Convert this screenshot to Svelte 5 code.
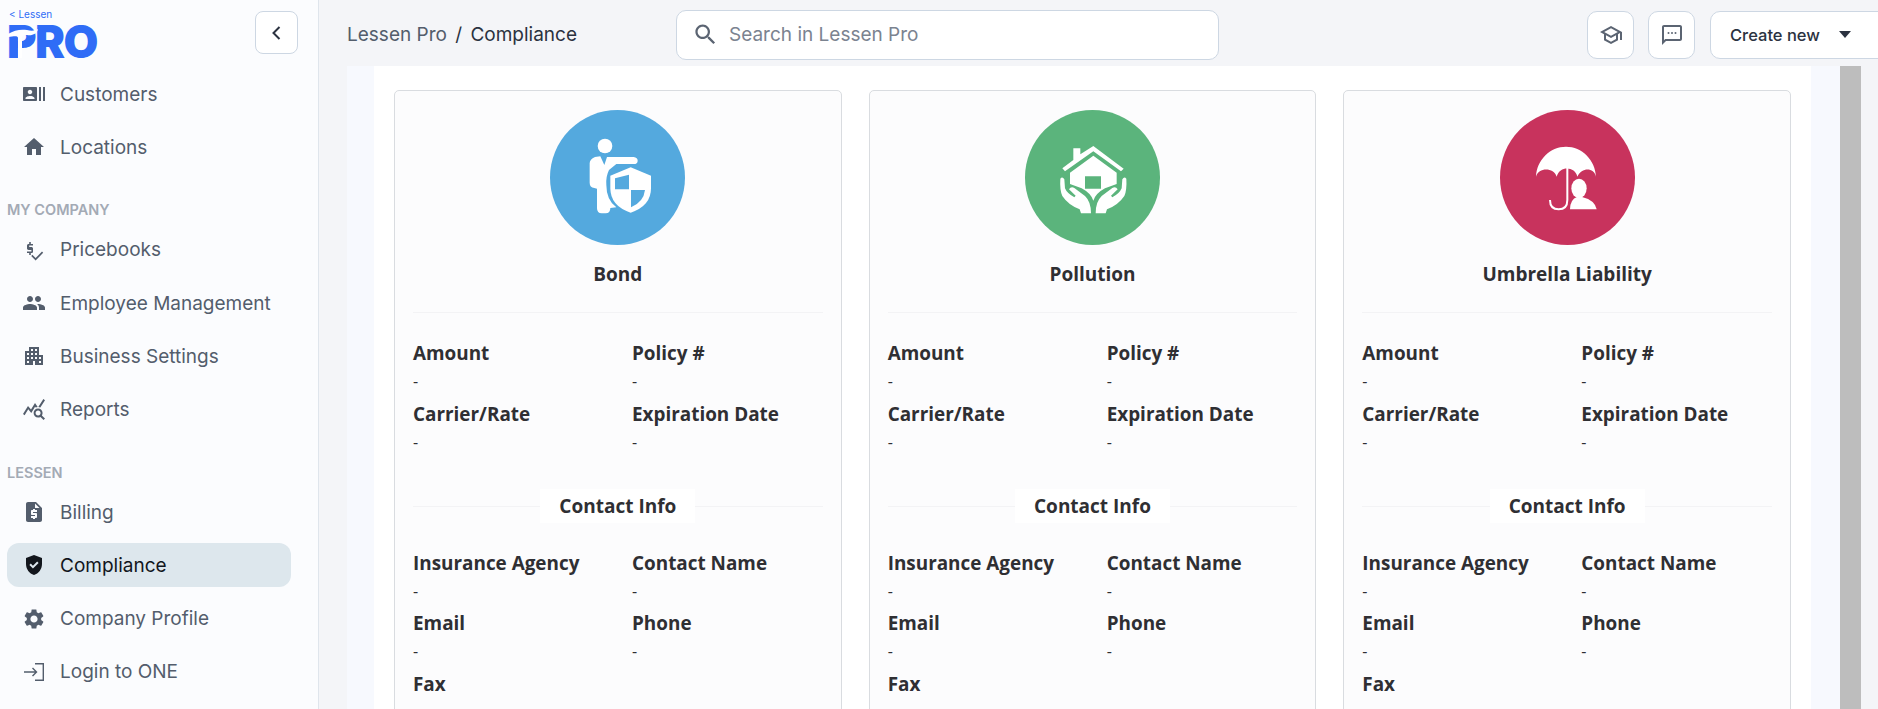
<script>
	const icons = {
		customers: "M21 5v14h2V5h-2zm-4 14h2V5h-2v14zM14 5H2c-.55 0-1 .45-1 1v12c0 .55.45 1 1 1h12c.55 0 1-.45 1-1V6c0-.55-.45-1-1-1zM8 7.75c1.24 0 2.25 1.01 2.25 2.25S9.24 12.25 8 12.25 5.75 11.24 5.75 10 6.76 7.75 8 7.75zM12.5 17h-9v-.75c0-1.5 3-2.25 4.5-2.25s4.5.75 4.5 2.25V17z",
		home: "M10 20v-6h4v6h5v-8h3L12 3 2 12h3v8z",
		price: "M11 9H7.2V7.6H11V6H8.8V4H7.2v2H6.6C5.7 6 5 6.7 5 7.6v3c0 .9.7 1.4 1.6 1.4h2.8v1.4H5V15h2.2v2h1.6v-2h.6c.9 0 1.6-.7 1.6-1.6v-2.8c0-.9-.7-1.6-1.6-1.6H7.2V9zM20 13.6l-6.4 6.4-3.2-3.2-1.2 1.2 4.4 4.4 7.6-7.6z",
		people: "M16 11c1.66 0 2.99-1.34 2.99-3S17.66 5 16 5c-1.66 0-3 1.34-3 3s1.34 3 3 3zm-8 0c1.66 0 2.99-1.34 2.99-3S9.66 5 8 5C6.34 5 5 6.34 5 8s1.34 3 3 3zm0 2c-2.33 0-7 1.17-7 3.5V19h14v-2.5c0-2.33-4.67-3.5-7-3.5zm8 0c-.29 0-.62.02-.97.05 1.16.84 1.97 1.97 1.97 3.45V19h6v-2.5c0-2.33-4.67-3.5-7-3.5z",
		building: "M17 11V3H7v4H3v14h8v-4h2v4h8V11h-4zM7 19H5v-2h2v2zm0-4H5v-2h2v2zm0-4H5V9h2v2zm4 4H9v-2h2v2zm0-4H9V9h2v2zm0-4H9V5h2v2zm4 8h-2v-2h2v2zm0-4h-2V9h2v2zm0-4h-2V5h2v2zm4 12h-2v-2h2v2zm0-4h-2v-2h2v2z",
		reports: "M19.88 18.47c.44-.7.7-1.51.7-2.39 0-2.49-2.01-4.5-4.5-4.5s-4.5 2.01-4.5 4.5 2.01 4.5 4.49 4.5c.88 0 1.7-.26 2.39-.7L21.58 23 23 21.58l-3.12-3.11zm-3.8.11c-1.38 0-2.5-1.12-2.5-2.5s1.12-2.5 2.5-2.5 2.5 1.12 2.5 2.5-1.12 2.5-2.5 2.5zm-.36-8.5c-.74.02-1.45.18-2.1.45l-.55-.83-3.8 6.18-3.01-3.52-3.63 5.81L1 17l5-8 3 3.5L13 6l2.72 4.08zm2.59.5c-.64-.28-1.33-.45-2.05-.49L21.38 2 23 3.18l-4.69 7.4z",
		billing: "M14 2H6c-1.1 0-1.99.9-1.99 2L4 20c0 1.1.89 2 1.99 2H18c1.1 0 2-.9 2-2V8l-6-6zm1 10h-4v1h3c.55 0 1 .45 1 1v3c0 .55-.45 1-1 1h-1v1h-2v-1H9v-2h4v-1h-3c-.55 0-1-.45-1-1v-3c0-.55.45-1 1-1h1V9h2v1h2v2zm-2-4V3.5L17.5 8H13z",
		shield: "M12 2 4 5v6.09c0 5.05 3.41 9.76 8 10.91 4.59-1.15 8-5.86 8-10.91V5l-8-3zm-1.06 13.54L7.4 12l1.41-1.41 2.12 2.12 4.24-4.24 1.41 1.41-5.64 5.66z",
		settings: "M19.14 12.94c.04-.3.06-.61.06-.94 0-.32-.02-.64-.07-.94l2.03-1.58c.18-.14.23-.41.12-.61l-1.92-3.32c-.12-.22-.37-.29-.59-.22l-2.39.96c-.5-.38-1.03-.7-1.62-.94l-.36-2.54c-.04-.24-.24-.41-.48-.41h-3.84c-.24 0-.43.17-.47.41l-.36 2.54c-.59.24-1.13.57-1.62.94l-2.39-.96c-.22-.08-.47 0-.59.22L2.74 8.87c-.12.21-.08.47.12.61l2.03 1.58c-.05.3-.09.63-.09.94s.02.64.07.94l-2.03 1.58c-.18.14-.23.41-.12.61l1.92 3.32c.12.22.37.29.59.22l2.39-.96c.5.38 1.03.7 1.62.94l.36 2.54c.05.24.24.41.48.41h3.84c.24 0 .44-.17.47-.41l.36-2.54c.59-.24 1.13-.56 1.62-.94l2.39.96c.22.08.47 0 .59-.22l1.92-3.32c.12-.22.07-.47-.12-.61l-2.01-1.58zM12 15.6c-1.98 0-3.6-1.62-3.6-3.6s1.62-3.6 3.6-3.6 3.6 1.62 3.6 3.6-1.62 3.6-3.6 3.6z",
		login: "M11 7.5 10 8.5l2.8 2.8H2v1.4h10.8L10 15.5l1 1 4.5-4.5L11 7.5zM13 3v1.4h7.6v15.2H13V21h9V3h-9z"
	};

	const nav = [
		{ label: "Customers", icon: "customers" },
		{ label: "Locations", icon: "home" },
		{ heading: "MY COMPANY" },
		{ label: "Pricebooks", icon: "price" },
		{ label: "Employee Management", icon: "people" },
		{ label: "Business Settings", icon: "building" },
		{ label: "Reports", icon: "reports" },
		{ heading: "LESSEN" },
		{ label: "Billing", icon: "billing" },
		{ label: "Compliance", icon: "shield", active: true },
		{ label: "Company Profile", icon: "settings" },
		{ label: "Login to ONE", icon: "login" }
	];

	const cards = [
		{ title: "Bond", kind: "bond", color: "#54a9de" },
		{ title: "Pollution", kind: "pollution", color: "#5bb47c" },
		{ title: "Umbrella Liability", kind: "umbrella", color: "#c8335d" }
	];

	const policy = ["Amount", "Policy #", "Carrier/Rate", "Expiration Date"];
	const contact = ["Insurance Agency", "Contact Name", "Email", "Phone", "Fax"];
</script>

{#snippet fields(list)}
	<div class="fields">
		{#each list as name}
			<div class="field">
				<div class="name">{name}</div>
				<div class="value">-</div>
			</div>
		{/each}
	</div>
{/snippet}

<div class="page">
	<aside class="sidebar">
		<div class="brand">
			<div class="logo">
				<span class="logo-top">&lt; Lessen</span>
				<span class="logo-pro">PRO</span>
				<svg class="logo-cut" viewBox="0 0 34 34" aria-hidden="true">
					<path d="M0 9 C6 5 13 4 19 5 C23 6 27 6 30 4 C29 9 24 11 19 10 C16 9.5 14 10.5 14 13 V33 H10 V13 C10 11 8 10.5 0 12Z" fill="#fff" />
				</svg>
			</div>
			<button class="collapse" aria-label="Collapse">
				<svg viewBox="0 0 24 24" width="24" height="24"><path d="M14.5 6 8.5 12l6 6" fill="none" stroke="#2b3240" stroke-width="2" /></svg>
			</button>
		</div>
		<nav>
			{#each nav as item}
				{#if item.heading}
					<div class="heading">{item.heading}</div>
				{:else}
					<div class="item" class:active={item.active}>
						<svg viewBox="0 0 24 24" width="24" height="24"><path d={icons[item.icon]} fill="currentColor" /></svg>
						<span>{item.label}</span>
					</div>
				{/if}
			{/each}
		</nav>
	</aside>

	<div class="main">
		<header class="topbar">
			<div class="crumbs"><span class="muted">Lessen Pro</span> <span class="sep">/</span> Compliance</div>
			<div class="search">
				<svg viewBox="0 0 24 24" width="27" height="27"><path d="M15.5 14h-.79l-.28-.27C15.41 12.59 16 11.11 16 9.5 16 5.91 13.09 3 9.5 3S3 5.91 3 9.5 5.91 16 9.5 16c1.61 0 3.09-.59 4.23-1.57l.27.28v.79l5 4.99L20.49 19l-4.99-5zm-6 0C7.01 14 5 11.99 5 9.5S7.01 5 9.5 5 14 7.01 14 9.5 11.99 14 9.5 14z" fill="#5b6472" /></svg>
				<span>Search in Lessen Pro</span>
			</div>
			<div class="actions">
				<button class="square" aria-label="Learn">
					<svg viewBox="0 0 24 24" width="24" height="24"><path d="M12 3 1 9l4 2.18v6L12 21l7-3.82v-6l2-1.09V17h2V9L12 3zm6.82 6L12 12.72 5.18 9 12 5.28 18.82 9zM17 15.99l-5 2.73-5-2.73v-3.72L12 15l5-2.73v3.72z" fill="#5b6472" /></svg>
				</button>
				<button class="square" aria-label="Messages">
					<svg viewBox="0 0 24 24" width="24" height="24"><path d="M20 2H4c-1.1 0-2 .9-2 2v18l4-4h14c1.1 0 2-.9 2-2V4c0-1.1-.9-2-2-2zm0 14H5.17L4 17.17V4h16v12z" fill="#5b6472" /><circle cx="8.5" cy="10" r="1" fill="#5b6472" /><circle cx="12" cy="10" r="1" fill="#5b6472" /><circle cx="15.5" cy="10" r="1" fill="#5b6472" /></svg>
				</button>
				<button class="create">
					<span>Create new</span>
					<svg viewBox="0 0 12 7" width="12" height="7"><path d="M0 0h12L6 7z" fill="#2b3240" /></svg>
				</button>
			</div>
		</header>

		<div class="body">
			<div class="track">
				<main class="panel">
					{#each cards as card}
						<section class="card">
							<div class="badge" style="background: {card.color}">
								{#if card.kind === "bond"}
									<svg viewBox="63 0 405 405" fill="#fff">
										<circle cx="228" cy="108" r="22" />
										<path d="M198 141 L214 139 L226 165 L234 141 H314 Q326 143 326 152 Q326 162 314 162 H262 L240 180 Q230 200 232 225 Q232 270 262 292 L244 294 Q244 310 230 310 H218 Q204 310 204 295 V236 L196 234 Q182 232 182 218 V160 Q182 148 198 141Z" />
										<path d="M305 172 L366 197 V235 Q366 288 305 308 Q244 288 244 235 V197Z" stroke={card.color} stroke-width="10" paint-order="stroke" />
										<path d="M300 194 V238 H258 V205Z M306 240 H348 Q344 276 306 292Z" fill={card.color} />
									</svg>
								{:else if card.kind === "pollution"}
									<svg viewBox="60 0 405 405" fill="#fff">
										<path d="M205 115 H226 V133 L265 108 L356 176 L348 184 L265 124 L180 184 L172 175 L205 150Z" />
										<path d="M265 137 L335 188 V222 L300 235 Q272 250 265 272 Q258 250 230 235 L195 222 V188Z M240 199 V236 H288 V199Z" fill-rule="evenodd" />
										<path d="M166 206 Q172 198 178 208 L180 235 Q186 250 208 262 L212 257 L192 238 Q198 228 208 234 L240 258 Q258 275 258 310 H228 L224 298 Q190 285 172 258 Q164 240 166 206Z" />
										<path d="M364 206 Q358 198 352 208 L350 235 Q344 250 322 262 L318 257 L338 238 Q332 228 322 234 L290 258 Q272 275 272 310 H302 L306 298 Q340 285 358 258 Q366 240 364 206Z" />
									</svg>
								{:else}
									<svg viewBox="60 0 405 405" fill="#fff">
										<path d="M168 200 C170 150 210 110 258 110 C306 110 346 150 348 200 C342 172 306 170 292 200 C286 170 240 165 230 200 C222 172 176 170 168 200Z" />
										<path d="M262 172 V270 Q262 298 236 298 Q210 298 210 270" fill="none" stroke="#fff" stroke-width="6" />
										<ellipse cx="297" cy="235" rx="23" ry="29" />
										<path d="M270 298 Q270 268 292 260 H304 Q345 270 350 298Z" />
									</svg>
								{/if}
							</div>
							<h3>{card.title}</h3>
							<hr />
							{@render fields(policy)}
							<div class="divider"><span>Contact Info</span></div>
							{@render fields(contact)}
						</section>
					{/each}
				</main>
			</div>
			<div class="scrollbar"></div>
		</div>
	</div>
</div>

<style>
	:global(body) {
		margin: 0;
		overflow: hidden;
	}

	button {
		padding: 0;
		cursor: pointer;
		font: inherit;
	}

	.page {
		display: flex;
		height: 709px;
		overflow: hidden;
		font-family: Inter, "Liberation Sans", sans-serif;
		background: #f4f5f8;
	}

	.sidebar {
		flex: 0 0 318px;
		background: #fbfcfe;
		border-right: 1px solid #dfe5ec;
	}

	.brand {
		display: flex;
		justify-content: space-between;
		align-items: flex-start;
		height: 66px;
		padding: 11px 20px 0 8px;
		box-sizing: border-box;
	}

	.logo {
		position: relative;
		width: 100px;
		height: 48px;
		color: #2f6cf6;
	}

	.logo-top {
		position: absolute;
		left: 1px;
		top: -3px;
		font-size: 10px;
		line-height: 12px;
		white-space: nowrap;
	}

	.logo-pro {
		position: absolute;
		left: -1px;
		top: 13.5px;
		font-size: 45px;
		line-height: 34px;
		font-weight: 900;
		letter-spacing: -1.5px;
	}

	.logo-cut {
		position: absolute;
		left: 0;
		top: 14px;
		width: 34px;
		height: 34px;
	}

	.collapse {
		display: flex;
		align-items: center;
		justify-content: center;
		width: 43px;
		height: 43px;
		box-sizing: border-box;
		background: #fff;
		border: 1px solid #cdd7e3;
		border-radius: 8px;
	}

	nav {
		display: flex;
		flex-direction: column;
		padding: 6px 27px 0 7px;
	}

	.heading {
		height: 14px;
		margin: 25px 0 10.5px;
		font-size: 14.5px;
		line-height: 14px;
		font-weight: 600;
		color: #a3aab5;
	}

	.item {
		display: flex;
		align-items: center;
		gap: 14px;
		height: 44px;
		margin-bottom: 9.2px;
		padding-left: 15px;
		border-radius: 12px;
		font-size: 19px;
		color: #535d6c;
	}

	.item svg {
		flex: none;
	}

	.item.active {
		background: #dde7ed;
		color: #12161c;
	}

	.main {
		flex: 1;
		min-width: 0;
		display: flex;
		flex-direction: column;
	}

	.topbar {
		flex: 0 0 66px;
		display: flex;
		align-items: center;
		padding: 3px 0 0 28px;
		box-sizing: border-box;
	}

	.crumbs {
		flex: none;
		width: 329px;
		font-size: 19px;
		color: #2b3240;
		white-space: nowrap;
	}

	.muted {
		color: #535d6c;
	}

	.sep {
		margin: 0 3px;
	}

	.search {
		flex: none;
		display: flex;
		align-items: center;
		gap: 10px;
		width: 543px;
		height: 50px;
		box-sizing: border-box;
		padding-left: 15px;
		background: #fff;
		border: 1px solid #cdd7e3;
		border-radius: 10px;
		font-size: 19px;
		color: #7b8390;
	}

	.actions {
		flex: none;
		display: flex;
		gap: 14px;
		margin-left: 368px;
	}

	.square {
		display: flex;
		align-items: center;
		justify-content: center;
		width: 47px;
		height: 48px;
		background: #fff;
		border: 1px solid #cdd7e3;
		border-radius: 10px;
	}

	.create {
		display: flex;
		align-items: center;
		gap: 19px;
		width: 190px;
		height: 48px;
		margin-left: 1px;
		padding-left: 19px;
		box-sizing: border-box;
		background: #fff;
		border: 1px solid #cdd7e3;
		border-radius: 10px;
		font-size: 16.5px;
		font-weight: 500;
		color: #2b3240;
		flex: none;
	}

	.body {
		flex: 1;
		min-height: 0;
		display: flex;
		padding-left: 28px;
		padding-right: 17px;
	}

	.track {
		flex: 1;
		min-width: 0;
		padding: 0 29px 0 27px;
		background: #f7f9fe;
	}

	.scrollbar {
		flex: 0 0 21px;
		background: #bdbdbd;
	}

	.panel {
		display: grid;
		grid-template-columns: repeat(3, 1fr);
		gap: 27px;
		height: 100%;
		padding: 24px 20px 0;
		box-sizing: border-box;
		background: #fff;
		overflow: hidden;
	}

	.card {
		height: 700px;
		padding: 19px 18px 0;
		box-sizing: border-box;
		background: #fcfcfd;
		border: 1px solid #d9dce0;
		border-radius: 5px;
		font-family: "Open Sans", "Liberation Sans", sans-serif;
		color: #2f2f33;
	}

	.badge {
		width: 135px;
		height: 135px;
		margin: 0 auto;
		border-radius: 50%;
	}

	.badge svg {
		display: block;
		width: 135px;
		height: 135px;
	}

	h3 {
		margin: 17px 0 0;
		font-size: 19px;
		line-height: 25px;
		font-weight: 700;
		text-align: center;
	}

	hr {
		margin: 25px 0 0;
		border: 0;
		border-top: 1px solid #f3f3f5;
	}

	.fields {
		display: grid;
		grid-template-columns: 219px 1fr;
		row-gap: 5.5px;
	}

	hr + .fields {
		margin-top: 27px;
	}

	.name {
		font-size: 18.9px;
		line-height: 27px;
		font-weight: 700;
	}

	.value {
		font-size: 16px;
		line-height: 28px;
	}

	.divider {
		position: relative;
		display: flex;
		justify-content: center;
		margin: 33px 0 27px;
	}

	.divider::before {
		content: "";
		position: absolute;
		left: 0;
		right: 0;
		top: 17px;
		border-top: 1px solid #f3f3f5;
	}

	.divider span {
		position: relative;
		height: 34px;
		padding: 0 19px;
		background: #fff;
		font-size: 19px;
		line-height: 34px;
		font-weight: 700;
	}
</style>
